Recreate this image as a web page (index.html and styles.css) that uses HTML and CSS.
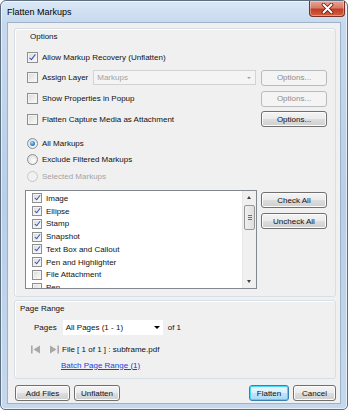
FILE: index.html
```html
<!DOCTYPE html>
<html>
<head>
<meta charset="utf-8">
<link rel="stylesheet" href="styles.css">
</head>
<body>
<div class="window">
  <div class="titlebar">
    <span class="title">Flatten Markups</span>
    <div class="close">
      <svg width="13" height="11" viewBox="0 0 13 11"><path d="M2.5 1.5 L10.5 9.5 M10.5 1.5 L2.5 9.5" stroke="#5a1a10" stroke-width="3.6" stroke-linecap="round"/><path d="M2.5 1.5 L10.5 9.5 M10.5 1.5 L2.5 9.5" stroke="#ffffff" stroke-width="2" stroke-linecap="round"/></svg>
    </div>
  </div>
  <div class="client">
    <div class="group options">
      <div class="glabel">Options</div>
      <div class="row r1"><span class="cb on"></span><span>Allow Markup Recovery (Unflatten)</span></div>
      <div class="row r2">
        <div class="left"><span class="cb"></span><span class="lbl">Assign Layer</span>
          <div class="combo dis"><span>Markups</span><span class="darr gray"></span></div></div>
        <div class="btn dis">Options...</div>
      </div>
      <div class="row r3">
        <div class="left"><span class="cb"></span><span>Show Properties in Popup</span></div>
        <div class="btn dis">Options...</div>
      </div>
      <div class="row r4">
        <div class="left"><span class="cb"></span><span>Flatten Capture Media as Attachment</span></div>
        <div class="btn">Options...</div>
      </div>
      <div class="radios">
        <div class="rrow"><span class="rb on"></span><span>All Markups</span></div>
        <div class="rrow"><span class="rb"></span><span>Exclude Filtered Markups</span></div>
        <div class="rrow dtext"><span class="rb dis"></span><span>Selected Markups</span></div>
      </div>
      <div class="listarea">
        <div class="list">
          <div class="items">
            <div class="item"><span class="cb sm on"></span>Image</div>
            <div class="item"><span class="cb sm on"></span>Ellipse</div>
            <div class="item"><span class="cb sm on"></span>Stamp</div>
            <div class="item"><span class="cb sm on"></span>Snapshot</div>
            <div class="item"><span class="cb sm on"></span>Text Box and Callout</div>
            <div class="item"><span class="cb sm on"></span>Pen and Highlighter</div>
            <div class="item"><span class="cb sm"></span>File Attachment</div>
            <div class="item"><span class="cb sm"></span>Pen</div>
          </div>
          <div class="sbar">
            <div class="sarrow up"></div>
            <div class="strack"><div class="thumb"><span></span><span></span><span></span></div></div>
            <div class="sarrow down"></div>
          </div>
        </div>
        <div class="lbtns">
          <div class="btn">Check All</div>
          <div class="btn">Uncheck All</div>
        </div>
      </div>
    </div>
    <div class="group prange">
      <div class="glabel">Page Range</div>
      <div class="prow">
        <span class="plbl">Pages</span>
        <div class="combo white"><span>All Pages (1 - 1)</span><span class="darr"></span></div>
        <span class="of">of 1</span>
      </div>
      <div class="frow">
        <svg class="nav" width="28" height="9" viewBox="0 0 28 9"><rect x="0" y="0.5" width="1.6" height="8" fill="#a9a9a9"/><path d="M9 0.5 L2.5 4.5 L9 8.5 Z" fill="#a9a9a9"/><path d="M19 0.5 L25.5 4.5 L19 8.5 Z" fill="#a9a9a9"/><rect x="26.4" y="0.5" width="1.6" height="8" fill="#a9a9a9"/></svg>
        <span>File [ 1 of 1 ] : subframe.pdf</span>
      </div>
      <div class="lrow"><span class="link">Batch Page Range (1)</span></div>
    </div>
    <div class="bottom">
      <div class="bleft">
        <div class="btn b-add">Add Files</div>
        <div class="btn b-unf">Unflatten</div>
      </div>
      <div class="bright">
        <div class="btn def b-fl">Flatten</div>
        <div class="btn b-can">Cancel</div>
      </div>
    </div>
  </div>
</div>
</body>
</html>
```
FILE: styles.css
```css
html, body {
  margin: 0;
  padding: 0;
  background: #ffffff;
  width: 350px;
  height: 412px;
  overflow: hidden;
}
body {
  font-family: "Liberation Sans", Arial, sans-serif;
  font-size: 8px;
  color: #111;
}
.window {
  width: 348px;
  height: 410px;
  box-sizing: border-box;
  border: 1px solid #5f6f82;
  border-radius: 6px 6px 5px 5px;
  background: linear-gradient(180deg, #dbe8f6 0px, #c6d9ee 22px, #b9cfe8 200px, #c5d8ed 410px);
  display: flex;
  flex-direction: column;
  box-shadow: inset 0 0 0 1px rgba(255,255,255,0.6);
}
.titlebar {
  height: 21px;
  display: flex;
  align-items: center;
  justify-content: space-between;
  padding-left: 6px;
  position: relative;
}
.title {
  font-family: "Liberation Sans", Arial, sans-serif;
  font-size: 9px;
  color: #000;
  margin-top: 1px;
}
.close {
  position: absolute;
  right: 2px;
  top: 0;
  width: 36px;
  height: 16px;
  box-sizing: border-box;
  border: 1px solid #7a3024;
  border-top: none;
  border-radius: 0 0 4px 4px;
  background: linear-gradient(180deg, #e8a597 0%, #d97a66 45%, #c23d27 55%, #d3603f 100%);
  display: flex;
  align-items: center;
  justify-content: center;
  box-shadow: inset 0 0 0 1px rgba(255,255,255,0.35);
}
.client {
  flex: 1;
  margin: 0 6px 5px 6px;
  border: 1px solid #9fb2c7;
  background: #f0f0f0;
  padding: 5px 4px 0 6px;
  display: flex;
  flex-direction: column;
}
.group {
  border: 1px solid #d5dfe5;
  border-radius: 3px;
  box-shadow: inset 1px 1px 0 #ffffff;
  display: flex;
  flex-direction: column;
}
.glabel {
  height: 14px;
  line-height: 14px;
  padding-left: 5px;
  margin-top: 1px;
}
.options {
  height: 269px;
  box-sizing: border-box;
  padding: 0 8px 0 10px;
}
.row {
  display: flex;
  align-items: center;
  justify-content: space-between;
  height: 20px;
}
.r1 { margin-top: 3px; justify-content: flex-start; padding-left: 2px; }
.row .left { display: flex; align-items: center; padding-left: 2px; }
.r2 { height: 21px; }
.r3 { height: 21px; }
.r4 { height: 20px; }
.cb {
  width: 11px;
  height: 11px;
  box-sizing: border-box;
  border: 1px solid #8e8f8f;
  background: linear-gradient(135deg, #d8d8d8 0%, #efefef 60%, #fbfbfb 100%);
  box-shadow: inset 0 0 0 1px #f4f4f4;
  margin-right: 4px;
  flex: none;
  position: relative;
}
.cb.on::after {
  content: "";
  position: absolute;
  left: 3px;
  top: 0px;
  width: 2px;
  height: 6px;
  border: solid #3552b8;
  border-width: 0 1.5px 1.5px 0;
  transform: rotate(38deg);
}
.cb.sm {
  width: 10px;
  height: 10px;
  margin-right: 4px;
}
.cb.sm.on::after { left: 3px; top: 0px; height: 5px; width: 2px; }
.lbl { margin-right: 5px; }
.combo {
  height: 15px;
  box-sizing: border-box;
  display: flex;
  align-items: center;
  justify-content: space-between;
  padding: 0 4px 0 3px;
}
.combo.dis {
  width: 163px;
  border: 1px solid #d3d3d3;
  background: #f4f4f4;
  color: #a3a3a3;
}
.darr {
  width: 0; height: 0;
  border-left: 3px solid transparent;
  border-right: 3px solid transparent;
  border-top: 3px solid #000;
}
.darr.gray { border-top-color: #a0a0a0; border-left-width: 2.5px; border-right-width: 2.5px; border-top-width: 2.5px; }
.btn {
  width: 66px;
  height: 16px;
  box-sizing: border-box;
  border: 1px solid #707070;
  border-radius: 3px;
  background: linear-gradient(180deg, #f4f4f4 0%, #ebebeb 48%, #dddddd 52%, #cfcfcf 100%);
  box-shadow: inset 0 0 0 1px #fbfbfb;
  display: flex;
  align-items: center;
  justify-content: center;
  flex: none;
}
.btn.dis {
  border-color: #b9bcbf;
  background: #f4f4f4;
  color: #8d8d8d;
  box-shadow: none;
}
.radios { margin-top: 6px; }
.rrow { display: flex; align-items: center; height: 16.5px; padding-left: 2px; }
.rrow.dtext { color: #a3a3a3; height: 17px; }
.rb {
  width: 11px;
  height: 11px;
  box-sizing: border-box;
  border-radius: 50%;
  border: 1px solid #8e8f8f;
  background: radial-gradient(circle at 60% 65%, #ffffff 0%, #e6e6e6 60%, #cfcfcf 100%);
  margin-right: 4px;
  position: relative;
  flex: none;
}
.rb.on::after {
  content: "";
  position: absolute;
  left: 2px; top: 2px;
  width: 5px; height: 5px;
  border-radius: 50%;
  background: radial-gradient(circle at 40% 35%, #9fe0ff 0%, #2a8ad4 55%, #174f8c 100%);
}
.rb.dis { border-color: #c8c8c8; background: #f1f1f1; }
.listarea {
  display: flex;
  justify-content: space-between;
  margin-top: 5px;
}
.list {
  width: 232px;
  height: 99px;
  box-sizing: border-box;
  border: 1px solid #828790;
  background: #fff;
  display: flex;
  overflow: hidden;
}
.items { flex: 1; padding: 1px 0 0 6px; overflow: hidden; }
.item {
  height: 12.75px;
  display: flex;
  align-items: center;
}
.sbar {
  width: 13px;
  display: flex;
  flex-direction: column;
  background: #f0f0f0;
  border-left: 1px solid #e8e8e8;
}
.sarrow { height: 13px; position: relative; }
.sarrow::after {
  content: "";
  position: absolute;
  left: 4px;
  top: 5px;
  border-left: 2.5px solid transparent;
  border-right: 2.5px solid transparent;
}
.sarrow.up::after { border-bottom: 3px solid #404040; }
.sarrow.down::after { border-top: 3px solid #404040; }
.strack { flex: 1; position: relative; }
.thumb {
  position: absolute;
  left: 1px;
  right: 1px;
  top: 1px;
  height: 25px;
  box-sizing: border-box;
  border: 1px solid #979797;
  border-radius: 2px;
  background: linear-gradient(90deg, #f0f0f0, #dedede);
  display: flex;
  flex-direction: column;
  align-items: center;
  justify-content: center;
  gap: 1px;
}
.thumb span { width: 4px; height: 1px; background: #707070; }
.lbtns {
  display: flex;
  flex-direction: column;
  gap: 5px;
  padding-top: 2px;
}
.prange {
  margin-top: 3px;
  height: 79px;
  box-sizing: border-box;
}
.prow {
  display: flex;
  align-items: center;
  height: 18px;
  margin-top: 2px;
  padding-left: 19px;
}
.plbl { margin-right: 5px; }
.combo.white {
  width: 102px;
  height: 17px;
  border: 1px solid #f0f0f0;
  background: #fff;
  padding-right: 3px;
}
.of { margin-left: 4px; }
.frow {
  display: flex;
  align-items: center;
  height: 14px;
  margin-top: 6px;
  padding-left: 16px;
}
.nav { margin-right: 3px; }
.lrow { height: 12px; margin-top: 3px; padding-left: 46px; display: flex; align-items: center; }
.link { color: #1a3fe0; text-decoration: underline; }
.bottom {
  display: flex;
  justify-content: space-between;
  margin-top: 6px;
  padding-left: 1px;
}
.bleft, .bright { display: flex; gap: 4px; }
.b-add { width: 55px; }
.b-unf { width: 46px; }
.b-fl { width: 40px; }
.b-can { width: 43px; }
.btn.def {
  border-color: #3c7fb1;
  background: linear-gradient(180deg, #eaf6fd 0%, #d9f0fc 48%, #bee6fd 52%, #a7d9f5 100%);
  box-shadow: inset 0 0 0 1px #48d8fb;
}
```
